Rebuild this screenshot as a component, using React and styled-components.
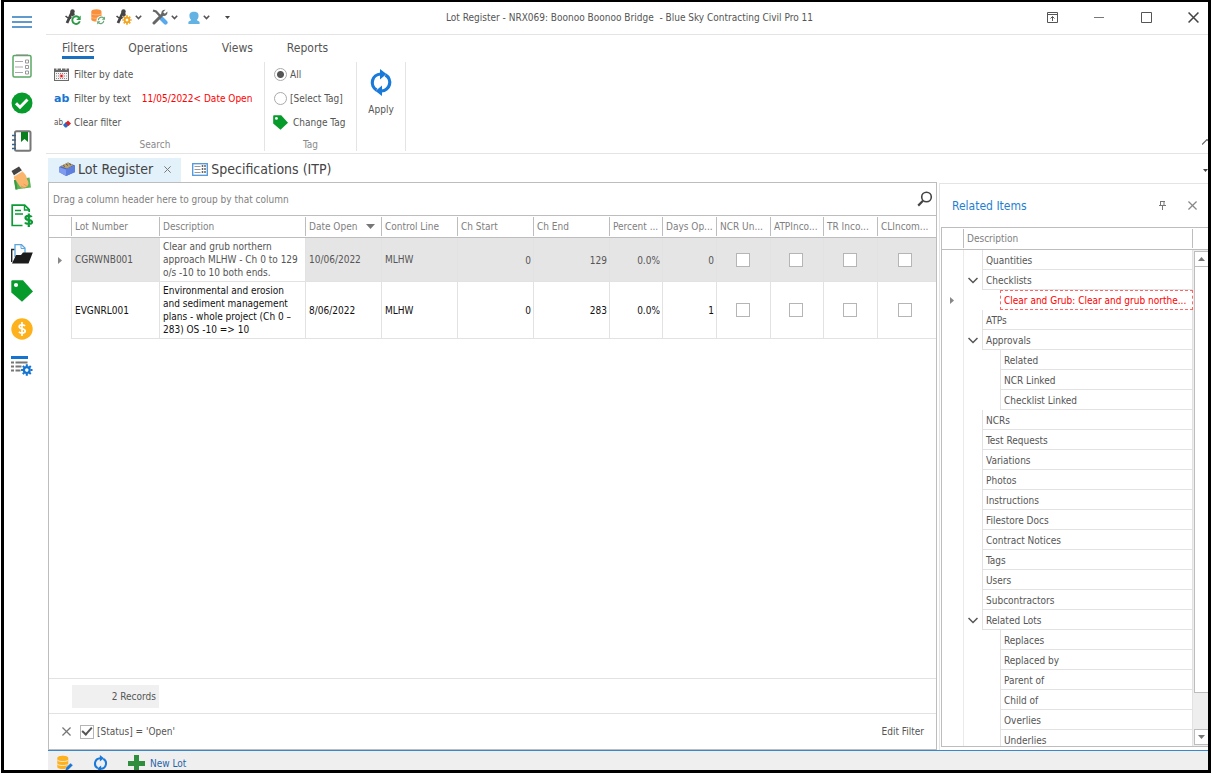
import React from 'react';
import styled, { createGlobalStyle } from 'styled-components';

const menuIcons = [
  { name: 'Checklists', icon: <ChecklistIcon /> },
  { name: 'Approvals', icon: <CheckIcon /> },
  { name: 'Notebook', icon: <NotebookIcon /> },
  { name: 'Payments', icon: <HandIcon /> },
  { name: 'Claims', icon: <ClaimIcon /> },
  { name: 'Files', icon: <FolderIcon /> },
  { name: 'Tags', icon: <TagIcon size={22} /> },
  { name: 'Costs', icon: <DollarIcon /> },
  { name: 'Settings', icon: <ListGearIcon /> },
];

const columns = [
  { title: 'Lot Number', width: 88 },
  { title: 'Description' },
  { title: 'Date Open', width: 76, sorted: true },
  { title: 'Control Line', width: 76 },
  { title: 'Ch Start', width: 76 },
  { title: 'Ch End', width: 76 },
  { title: 'Percent ...', width: 53 },
  { title: 'Days Op...', width: 54 },
  { title: 'NCR Un...', width: 54 },
  { title: 'ATPInco...', width: 53 },
  { title: 'TR Inco...', width: 54 },
  { title: 'CLIncom...', width: 58 },
];

const lots = [
  {
    number: 'CGRWNB001',
    description: 'Clear and grub northern approach MLHW - Ch 0 to 129 o/s -10 to 10 both ends.',
    date: '10/06/2022', line: 'MLHW', start: 0, end: 129, percent: '0.0%', days: 0,
    focused: true, height: 44,
  },
  {
    number: 'EVGNRL001',
    description: 'Environmental and erosion and sediment management plans - whole project (Ch 0 – 283) OS -10 => 10',
    date: '8/06/2022', line: 'MLHW', start: 0, end: 283, percent: '0.0%', days: 1,
    height: 57,
  },
];

const flags = ['NCR', 'ATP', 'TR', 'CL'];

const relatedItems = [
  { text: 'Quantities' },
  { text: 'Checklists', open: true },
  { text: 'Clear and Grub: Clear and grub northe...', child: true, current: true },
  { text: 'ATPs' },
  { text: 'Approvals', open: true },
  { text: 'Related', child: true },
  { text: 'NCR Linked', child: true },
  { text: 'Checklist Linked', child: true },
  { text: 'NCRs' },
  { text: 'Test Requests' },
  { text: 'Variations' },
  { text: 'Photos' },
  { text: 'Instructions' },
  { text: 'Filestore Docs' },
  { text: 'Contract Notices' },
  { text: 'Tags' },
  { text: 'Users' },
  { text: 'Subcontractors' },
  { text: 'Related Lots', open: true },
  { text: 'Replaces', child: true },
  { text: 'Replaced by', child: true },
  { text: 'Parent of', child: true },
  { text: 'Child of', child: true },
  { text: 'Overlies', child: true },
  { text: 'Underlies', child: true },
];

class App extends React.Component {
  render() {
    return (
      <Window>
        <GlobalStyle />
        <Sidebar>
          <Hamburger aria-label="Menu"><HamburgerIcon /></Hamburger>
          <SideMenu>
            {menuIcons.map(item => (
              <SideButton key={item.name} aria-label={item.name}>{item.icon}</SideButton>
            ))}
          </SideMenu>
        </Sidebar>
        <Main>
          <TitleBar />
          <Ribbon />
          <Workspace>
            <DocumentTabs />
            <Panels>
              <LotGrid />
              <RelatedPanel />
            </Panels>
            <StatusBar>
              <IconButton aria-label="Edit data"><DataEditIcon /></IconButton>
              <IconButton aria-label="Refresh"><RefreshIcon width={15} height={17} /></IconButton>
              <NewLot><PlusIcon />New Lot</NewLot>
            </StatusBar>
          </Workspace>
        </Main>
      </Window>
    );
  }
}

export default App;

function TitleBar() {
  return (
    <TitleHolder>
      <QuickAccess>
        <IconButton aria-label="Refresh project"><CompassIcon /></IconButton>
        <IconButton aria-label="Refresh data"><DataRefreshIcon /></IconButton>
        <IconButton aria-label="Project settings"><CompassIcon gear /><Chevron /></IconButton>
        <IconButton aria-label="Tools"><ToolsIcon /><Chevron /></IconButton>
        <IconButton aria-label="User"><UserIcon /><Chevron /></IconButton>
        <IconButton aria-label="Customise"><SmallArrow /></IconButton>
      </QuickAccess>
      <WindowTitle>{'Lot Register - NRX069: Boonoo Boonoo Bridge  - Blue Sky Contracting Civil Pro 11'}</WindowTitle>
      <WindowButtons>
        <WindowButton aria-label="Ribbon display">
          <svg width="11" height="11" fill="none" stroke="#555">
            <path d="M.5.5h10v10H.5zM.5 2.5h10M5.5 9V4.500M3.500 6.500l2-2 2 2" />
          </svg>
        </WindowButton>
        <WindowButton aria-label="Minimise">
          <svg width="11" height="11" stroke="#777"><path d="M0 5.500h10" /></svg>
        </WindowButton>
        <WindowButton aria-label="Maximise">
          <svg width="11" height="11" fill="none" stroke="#555"><path d="M.5.5h10v10H.5z" /></svg>
        </WindowButton>
        <WindowButton aria-label="Close"><CrossIcon size={11} color="#444" /></WindowButton>
      </WindowButtons>
    </TitleHolder>
  );
}

function Ribbon() {
  return (
    <RibbonHolder>
      <RibbonTabs>
        <RibbonTab $active>Filters</RibbonTab>
        <RibbonTab>Operations</RibbonTab>
        <RibbonTab>Views</RibbonTab>
        <RibbonTab>Reports</RibbonTab>
      </RibbonTabs>
      <RibbonBody>
        <RibbonGroup $width={219}>
          <RibbonRow><RibbonButton><CalendarIcon />Filter by date</RibbonButton></RibbonRow>
          <RibbonRow>
            <RibbonButton><TextIcon>ab</TextIcon>Filter by text</RibbonButton>
            <FilterText>11/05/2022&lt; Date Open</FilterText>
          </RibbonRow>
          <RibbonRow>
            <RibbonButton><EraseIcon><span>ab</span><EraserIcon /></EraseIcon>Clear filter</RibbonButton>
          </RibbonRow>
          <GroupTitle>Search</GroupTitle>
        </RibbonGroup>
        <RibbonGroup $width={92}>
          <RibbonRow>
            <RadioLabel><Radio type="radio" name="tag" defaultChecked />All</RadioLabel>
          </RibbonRow>
          <RibbonRow>
            <RadioLabel><Radio type="radio" name="tag" />[Select Tag]</RadioLabel>
          </RibbonRow>
          <RibbonRow><RibbonButton><TagIcon size={15} />Change Tag</RibbonButton></RibbonRow>
          <GroupTitle>Tag</GroupTitle>
        </RibbonGroup>
        <RibbonGroup $width={49}>
          <ApplyButton><RefreshIcon width={22} height={27} />Apply</ApplyButton>
        </RibbonGroup>
        <CollapseButton aria-label="Collapse ribbon">
          <svg width="6" height="6" fill="none" stroke="#666" strokeWidth="1.2"><path d="M0 5.500l5-5 5 5" /></svg>
        </CollapseButton>
      </RibbonBody>
    </RibbonHolder>
  );
}

function DocumentTabs() {
  return (
    <TabStrip>
      <DocumentTab $active>
        <TabName><LotBoxIcon />Lot Register</TabName>
        <IconButton aria-label="Close tab"><CrossIcon size={7} color="#777" /></IconButton>
      </DocumentTab>
      <DocumentTab>
        <TabName><SpecIcon />Specifications (ITP)</TabName>
      </DocumentTab>
      <TabListButton aria-label="Open tabs"><SmallArrow /></TabListButton>
    </TabStrip>
  );
}

function LotGrid() {
  return (
    <GridPanel>
      <GroupPanel>
        <span>Drag a column header here to group by that column</span>
        <IconButton aria-label="Search">
          <svg width="16" height="16" fill="none" stroke="#444">
            <circle cx="9.500" cy="6" r="4.800" strokeWidth="1.600" />
            <path d="M6 9.800L1.200 14.600" strokeWidth="2.200" />
          </svg>
        </IconButton>
      </GroupPanel>
      <Table>
        <colgroup>
          <Col $width={23} />
          {columns.map(col => <Col key={col.title} $width={col.width} />)}
        </colgroup>
        <thead>
          <tr>
            <HeadCell><HeadInner /></HeadCell>
            {columns.map((col, i) => (
              <HeadCell key={col.title}>
                <HeadInner $last={i === columns.length - 1}>
                  {col.title}
                  {col.sorted && <SortArrow viewBox="0 0 9 5"><path d="M0 0h9L4.500 5z" fill="#777" /></SortArrow>}
                </HeadInner>
              </HeadCell>
            ))}
          </tr>
        </thead>
        <tbody>
          {lots.map(lot => (
            <LotRow key={lot.number} $focused={lot.focused} $height={lot.height}>
              <MarkerCell>{lot.focused && <RowMarker />}</MarkerCell>
              <Cell>{lot.number}</Cell>
              <DescriptionCell>{lot.description}</DescriptionCell>
              <Cell>{lot.date}</Cell>
              <Cell>{lot.line}</Cell>
              <Cell $align="right">{lot.start}</Cell>
              <Cell $align="right">{lot.end}</Cell>
              <Cell $align="right">{lot.percent}</Cell>
              <Cell $align="right">{lot.days}</Cell>
              {flags.map(flag => (
                <Cell key={flag} $align="center"><CheckBox type="checkbox" aria-label={lot.number + ' ' + flag} /></Cell>
              ))}
            </LotRow>
          ))}
        </tbody>
      </Table>
      <Summary><RecordCount>2 Records</RecordCount></Summary>
      <FilterBar>
        <IconButton aria-label="Clear filter"><CrossIcon size={9} color="#777" /></IconButton>
        <FilterLabel><CheckBox type="checkbox" defaultChecked />[Status] = 'Open'</FilterLabel>
        <EditFilter>Edit Filter</EditFilter>
      </FilterBar>
    </GridPanel>
  );
}

function RelatedPanel() {
  return (
    <SidePanel>
      <PanelHeader>
        <PanelTitle>Related Items</PanelTitle>
        <IconButton aria-label="Pin">
          <svg width="7" height="9" fill="none" stroke="#777"><path d="M1 .5h5M1.500.5v4M5 .5v4M0 4.500h7M3.500 5v4" /></svg>
        </IconButton>
        <IconButton aria-label="Close panel"><CrossIcon size={9} color="#888" /></IconButton>
      </PanelHeader>
      <Tree>
        <TreeHead><TreeTitle>Description</TreeTitle></TreeHead>
        <TreeBody>
          <TreeList>
            {relatedItems.map(item => (
              <TreeRow key={item.text}>
                <TreeMarker>{item.current && <RowMarker />}</TreeMarker>
                <TreeIndent $child={item.child}>
                  {item.open && (
                    <IconButton aria-label={'Collapse ' + item.text}>
                      <svg width="10" height="7" fill="none" stroke="#555" strokeWidth="1.500"><path d="M.5 1L5 5.500 9.500 1" /></svg>
                    </IconButton>
                  )}
                </TreeIndent>
                <TreeText $current={item.current}>{item.text}</TreeText>
              </TreeRow>
            ))}
          </TreeList>
          <ScrollBar>
            <ScrollButton aria-label="Scroll up"><svg width="7" height="4" fill="#777"><path d="M0 4h7L3.500 0z" /></svg></ScrollButton>
            <ScrollThumb />
            <ScrollButton aria-label="Scroll down"><svg width="7" height="4" fill="#777"><path d="M0 0h7L3.500 4z" /></svg></ScrollButton>
          </ScrollBar>
        </TreeBody>
      </Tree>
    </SidePanel>
  );
}

/* icons */

function HamburgerIcon() {
  return <svg width="20" height="12" stroke="#2b78bd" strokeWidth="1.300"><path d="M0 1h20M0 6h20M0 11h20" /></svg>;
}

function Chevron() {
  return <svg width="7" height="5" fill="none" stroke="#555" strokeWidth="1.600"><path d="M.8.8l2.700 2.700L6.200.8" /></svg>;
}

function SmallArrow() {
  return <svg width="5" height="3" fill="#444"><path d="M0 0h5L2.500 3z" /></svg>;
}

function CrossIcon({ size, color }) {
  return (
    <svg width={size} height={size} viewBox="0 0 10 10" fill="none" stroke={color} strokeWidth="1.400">
      <path d="M.5.5l9 9M9.500.5l-9 9" />
    </svg>
  );
}

function RowMarker() {
  return <svg width="4" height="7" fill="#888"><path d="M0 0l4 3.500L0 7z" /></svg>;
}

function RefreshIcon({ width, height }) {
  return (
    <svg width={width} height={height} viewBox="0 0 22 27">
      <g fill="none" stroke="#1a7ad9" strokeWidth="3.200">
        <path d="M6.500 21A8.600 8.600 0 0 1 10.500 5" />
        <path d="M15.500 6A8.600 8.600 0 0 1 11.500 22" />
      </g>
      <path d="M10 0l6.500 5L10 10.500zM12 16.500v10.500l-6.500-5z" fill="#1a7ad9" />
    </svg>
  );
}

function ChecklistIcon() {
  return (
    <svg width="20" height="24" viewBox="0 0 20 24" fill="none">
      <rect x="1" y="1.500" width="18" height="21.500" rx="1.500" stroke="#5aa864" strokeWidth="1.500" />
      <path d="M4 1h12" stroke="#8a8a8a" />
      <path d="M3 7.500h8M3 13h8M3 18.500h8" stroke="#aaa" />
      <path d="M13.500 6h3v3h-3zM13.500 11.500h3v3h-3zM13.500 17h3v3h-3z" stroke="#999" />
    </svg>
  );
}

function CheckIcon() {
  return (
    <svg width="22" height="22" viewBox="0 0 22 22" fill="none">
      <circle cx="11" cy="11" r="10.500" fill="#079b2b" />
      <path d="M5 11.200l4 4 7.500-7.700" stroke="#fff" strokeWidth="3" />
    </svg>
  );
}

function NotebookIcon() {
  return (
    <svg width="20" height="22" viewBox="0 0 20 22">
      <rect x="3" y="1.200" width="15.500" height="19.500" rx="1.500" fill="#fff" stroke="#777" strokeWidth="2" />
      <path d="M9 2h7v10l-3.500-3L9 12z" fill="#07801c" />
      <path d="M0 5.500h4M0 10h4M0 14.500h4M0 18.500h4" stroke="#35648f" strokeWidth="1.500" />
    </svg>
  );
}

function HandIcon() {
  return (
    <svg width="22" height="24" viewBox="0 0 22 24">
      <path d="M3 14l15.500-2.500 1.500 10L4.500 23.500z" fill="#5cb458" />
      <path d="M3 14l1.500 9.500h2L5 14z" fill="#3a9a40" />
      <path d="M3 9.500L11 5c3 2.500 5 5 5 8.500 1.800 2 2.200 5 0 7-3 2-6 1.500-7.500-.5L5 14.500c-2-.5-2.500-3-2-5z" fill="#f9b66c" />
      <path d="M10 20l4 2M12.500 18l4 2.500" stroke="#d98f4a" strokeWidth=".7" />
      <path d="M.5 5L8 .5l3 4-8 5z" fill="#444" />
      <path d="M10.500 4.500l1 .9-8 5.200-.8-1.200z" fill="#eee" />
    </svg>
  );
}

function ClaimIcon() {
  return (
    <svg width="22" height="23" viewBox="0 0 22 23" fill="none" stroke="#0b9a35">
      <path d="M11.500 21.500H1.200V1.200h12.500l4.500 4.500V8" strokeWidth="1.700" />
      <path d="M13.500 1v5h5" strokeWidth="1.400" />
      <path d="M4 6.500h6M4 10h8" strokeWidth="1.500" />
      <path d="M20.700 13c-1-1.500-6.200-1.800-6.200.9 0 2.800 6.500 1.300 6.500 4 0 2.900-6 2.400-7 .6M17.800 9.500V23" strokeWidth="2.200" />
    </svg>
  );
}

function FolderIcon() {
  return (
    <svg width="22" height="20" viewBox="0 0 22 20">
      <path d="M.7 18V5.500h3" fill="none" stroke="#222" strokeWidth="1.400" />
      <path d="M4 13V.7h6.500L14 4v8" fill="#fff" stroke="#5ba6de" strokeWidth="1.300" />
      <path d="M10 .7V4.500h4" fill="none" stroke="#5ba6de" />
      <path d="M1 19.500L5 11h5l2-2.500h9.800L17.500 19.500z" fill="#1c1c1c" />
    </svg>
  );
}

function TagIcon({ size }) {
  return (
    <svg width={size} height={size} viewBox="0 0 22 22">
      <path d="M.3 1.500Q.3.300 1.500.3h10.500L22 11.500 11 21.800.3 12.500z" fill="#079b2b" />
      <circle cx="5" cy="5" r="2.100" fill="#fff" />
    </svg>
  );
}

function DollarIcon() {
  return (
    <svg width="22" height="22" viewBox="0 0 22 22" fill="none" stroke="#fff" strokeWidth="1.700">
      <circle cx="11" cy="11" r="10.700" fill="#fdb11d" stroke="none" />
      <path d="M14 8c-1-1.700-5.800-1.700-5.800.7 0 3 6 1.500 6 4.400 0 2.600-5 2.500-6.300.7M11 4v14" />
    </svg>
  );
}

function GearShape({ color, hole }) {
  return (
    <g stroke={color}>
      <circle cx="0" cy="0" r="3" fill={hole} strokeWidth="2.400" />
      <path d="M0-6v2M0 4v2M-6 0h2M4 0h2M-4.200-4.200l1.400 1.400M2.800 2.800l1.400 1.400M-4.200 4.200l1.400-1.400M2.800-2.800l1.400-1.400" strokeWidth="2.200" />
    </g>
  );
}

function ListGearIcon() {
  return (
    <svg width="22" height="20" viewBox="0 0 22 20">
      <path d="M0 1.500h17" stroke="#1574cf" strokeWidth="3" />
      <path d="M0 6.500h3M4.500 6.500h12M0 10.500h3M4.500 10.500h6M0 14.500h3M4.500 14.500h5" stroke="#777" strokeWidth="2.200" />
      <g transform="translate(15.800 14) scale(.95)"><GearShape color="#1574cf" hole="#fff" /></g>
    </svg>
  );
}

function CompassIcon({ gear }) {
  return (
    <svg width="16" height="16" viewBox="0 0 16 16" fill="none">
      <path d="M7 3L2 14M7.500 3l2 7" stroke="#444" strokeWidth="2.800" />
      <circle cx="7.500" cy="2.500" r="2.200" fill="#444" />
      <path d="M.5 7c2.500 3 6.500 3 9.500 0" stroke="#444" strokeWidth="1.500" />
      {gear ? (
        <g transform="translate(11 11)">
          <circle r="4.700" fill="#fff" />
          <g transform="scale(.78)"><GearShape color="#f0a420" hole="#fff" /></g>
        </g>
      ) : (
        <g>
          <circle cx="11" cy="11" r="5" fill="#fff" />
          <path d="M14 8.600a3.800 3.800 0 1 0 .8 3.600" stroke="#2a9a45" strokeWidth="1.900" />
          <path d="M15.700 6.500v4.500h-4.500z" fill="#2a9a45" />
        </g>
      )}
    </svg>
  );
}

function DataRefreshIcon() {
  return (
    <svg width="15" height="16" viewBox="0 0 15 16" fill="none">
      <path d="M.3 2.500c0-3 10.200-3 10.200 0v8c0 2.800-10.200 2.800-10.200 0z" fill="#f8903c" />
      <path d="M.3 4.700c1 1.500 9.200 1.500 10.200 0M.3 8.200c1 1.500 9.200 1.500 10.200 0" stroke="#fbd0aa" strokeWidth=".6" />
      <circle cx="10" cy="11.500" r="4.500" fill="#fff" />
      <path d="M12.800 9.200a3.200 3.200 0 0 0-5.500 2M7.500 13.800a3.200 3.200 0 0 0 5.300-2" stroke="#68a878" strokeWidth="1.200" />
      <path d="M14 7.500v3.300h-3.300zM6.200 15.500v-3.300h3.300z" fill="#68a878" />
    </svg>
  );
}

function ToolsIcon() {
  return (
    <svg width="16" height="16" viewBox="0 0 16 16" fill="none">
      <path d="M1 1.500l3 1 5.500 6" stroke="#666" strokeWidth="2.200" />
      <path d="M9.500 9.500l4 4" stroke="#58a8ee" strokeWidth="4.200" strokeLinecap="round" />
      <path d="M2 14L11 5" stroke="#666" strokeWidth="3" strokeLinecap="round" />
      <path d="M13.500.8l-2.500 2.500 1.700 1.700 2.600-2.500c.8 3.200-2.500 5.500-5 4C8 3.800 10.300-.2 13.500.8z" fill="#666" />
    </svg>
  );
}

function UserIcon() {
  return (
    <svg width="12" height="13" viewBox="0 0 12 13" fill="#62b2e4">
      <path d="M6 .8c4 0 4.800 2.200 4.500 4.700-.1 1.500-.8 2.500-1.700 3.400.3.800 2.800.7 2.800 2.600V13H.4v-1.500c0-1.900 2.500-1.800 2.800-2.600-.9-.9-1.600-1.900-1.700-3.400C1.200 3 2 .8 6 .8z" />
    </svg>
  );
}

function CalendarIcon() {
  return (
    <svg width="15" height="14" viewBox="0 0 15 14">
      <path d="M0 1.500h15v12.500H0z" fill="#6a6a6a" />
      <path d="M1 5h13v8H1z" fill="#f4f4f4" />
      <path d="M3 0v3M7.500 0v3M12 0v3" stroke="#fff" />
      <path d="M2 6.500h11M2 9h11M2 11.500h11" stroke="#888" strokeDasharray="1 1" />
      <path d="M5.500 7h4v4h-4z" fill="#f9b0b0" />
      <path d="M6.500 8h2v2h-2z" fill="#d11" />
    </svg>
  );
}

function EraserIcon() {
  return (
    <svg width="8" height="8" viewBox="0 0 8 8">
      <path d="M0 5l3-3 3 3-2.500 2.500H2z" fill="#2c6bc5" />
      <path d="M2.500 3L5 .5l3 3L5.500 6z" fill="#d92525" />
    </svg>
  );
}

function LotBoxIcon() {
  return (
    <svg width="16" height="14" viewBox="0 0 16 14">
      <path d="M0 5l9-4.500 7 3v6.500l-9 4-7-4z" fill="#4b6cc4" />
      <path d="M1.500 4L9 .5l5.500 2.500L8 6.500z" fill="#b9a274" />
      <path d="M4 3.500l2 1M7 2l2 1.500M10 1.500l2 1.500" stroke="#6d5b35" />
      <path d="M0 5l7 2.500 9-4V10l-9 4-7-4z" fill="#7f9bef" />
      <path d="M7 7.500L16 3.500V10l-9 4z" fill="#5e7fdc" />
    </svg>
  );
}

function SpecIcon() {
  return (
    <svg width="16" height="13" viewBox="0 0 16 13" fill="none">
      <rect x=".7" y=".7" width="14.600" height="11.600" stroke="#4f95dc" strokeWidth="1.300" fill="#fff" />
      <path d="M2.500 3.500h6M2.500 6.500h6M2.500 9.500h6" stroke="#999" />
      <path d="M10.500 2v9M13 2v9" stroke="#666" strokeWidth="1.500" strokeDasharray="2 1" />
    </svg>
  );
}

function DataEditIcon() {
  return (
    <svg width="16" height="17" viewBox="0 0 16 17" fill="none">
      <path d="M.3 3c0-3 11-3 11 0v9c0 2.800-11 2.800-11 0z" fill="#fdb11d" />
      <path d="M.3 5c1 2 10 2 11 0M.3 9c1 2 10 2 11 0" stroke="#efefef" strokeWidth=".9" />
      <path d="M8 16l1-3.500L13.500 8l2.500 2.300-4.500 4.500z" fill="#1a75d2" stroke="#efefef" strokeWidth=".5" />
    </svg>
  );
}

function PlusIcon() {
  return <svg width="17" height="17"><path d="M6 0h5v6h6v5h-6v6H6v-6H0V6h6z" fill="#2f8f3f" /></svg>;
}

/* styles */

const GlobalStyle = createGlobalStyle`
  * {
    box-sizing: border-box;
  }
  body {
    margin: 0;
    background: #fff;
    color: #555;
    font-family: "DejaVu Sans Condensed", "DejaVu Sans", sans-serif;
    font-size: 10px;
    line-height: 13px;
  }
  button, input {
    font: inherit;
    color: inherit;
    margin: 0;
  }
  button {
    padding: 0;
    border: 0;
    background: none;
  }
  svg {
    display: block;
    flex: none;
  }
`;

const Window = styled.div`
  display: flex;
  height: calc(100vh - 1px);
  min-height: 480px;
  margin-left: 1px;
  border: 3px solid #000;
  border-top-width: 2px;
  overflow: hidden;
`;

const Sidebar = styled.nav`
  flex: none;
  width: 42px;
  padding-right: 6px;
`;

const Hamburger = styled.button`
  display: flex;
  align-items: center;
  justify-content: center;
  width: 100%;
  height: 40px;
`;

const SideMenu = styled.div`
  display: grid;
  grid-auto-rows: 1fr;
  height: 338px;
  margin-top: 5px;
`;

const SideButton = styled.button`
  display: flex;
  align-items: center;
  justify-content: center;
`;

const Main = styled.main`
  display: flex;
  flex: 1;
  flex-direction: column;
  min-width: 0;
`;

const IconButton = styled.button`
  display: flex;
  align-items: center;
  gap: 3px;
`;

const TitleHolder = styled.header`
  display: flex;
  flex: none;
  align-items: center;
  height: 33px;
  padding-bottom: 2px;
  border-bottom: 1px solid #e4e4e4;
`;

const QuickAccess = styled.div`
  display: flex;
  align-items: center;
  gap: 10px;
  padding-left: 19px;

  ${IconButton}:last-child {
    margin-left: 5px;
  }
`;

const WindowTitle = styled.div`
  flex: 1;
  padding-right: 8px;
  text-align: center;
  white-space: pre;
`;

const WindowButtons = styled.div`
  display: flex;
  gap: 17px;
`;

const WindowButton = styled.button`
  display: flex;
  align-items: center;
  justify-content: center;
  width: 30px;
  height: 30px;
`;

const RibbonHolder = styled.section`
  flex: none;
  border-bottom: 1px solid #e4e4e4;
`;

const RibbonTabs = styled.div`
  display: flex;
  gap: 34px;
  padding-left: 16px;
`;

const RibbonTab = styled.button`
  padding-top: 5px;
  border-bottom: 3px solid ${props => props.$active ? '#1a6fc0' : 'transparent'};
  font-size: 12px;
  line-height: 16px;
`;

const RibbonBody = styled.div`
  display: flex;
  padding: 3px 0 2px;
`;

const RibbonGroup = styled.div`
  width: ${props => props.$width}px;
  padding-left: 8px;
  border-right: 1px solid #e4e4e4;
`;

const RibbonRow = styled.div`
  display: flex;
  align-items: center;
  gap: 11px;
  height: 24px;
`;

const RibbonButton = styled.button`
  display: flex;
  align-items: center;
  gap: 5px;
  white-space: nowrap;
`;

const TextIcon = styled.span`
  width: 15px;
  color: #1a75d2;
  font-family: "DejaVu Sans", sans-serif;
  font-size: 11px;
  font-weight: bold;
`;

const EraseIcon = styled.span`
  display: flex;
  align-items: flex-end;
  width: 15px;
  font-size: 8px;
  line-height: 11px;
`;

const FilterText = styled.span`
  color: #f00;
  white-space: nowrap;
`;

const GroupTitle = styled.div`
  margin: 4px 0 0 -8px;
  color: #8a8a8a;
  text-align: center;
`;

const RadioLabel = styled.label`
  display: flex;
  align-items: center;
  gap: 3px;
  padding-left: 1px;
`;

const Radio = styled.input`
  appearance: none;
  width: 13px;
  height: 13px;
  border: 1px solid #aaa;
  border-radius: 50%;
  background: #fff;

  &:checked {
    background: radial-gradient(#555 0 3px, #fff 4px);
  }
`;

const ApplyButton = styled.button`
  display: flex;
  flex-direction: column;
  align-items: center;
  gap: 7px;
  width: 32px;
  padding-top: 7px;
`;

const CollapseButton = styled.button`
  align-self: flex-end;
  margin: 0 0 6px auto;
`;

const Workspace = styled.div`
  display: flex;
  flex: 1;
  flex-direction: column;
  min-height: 0;
  padding-left: 2px;
`;

const TabStrip = styled.div`
  display: flex;
  flex: none;
  height: 28px;
  padding-top: 4px;
`;

const DocumentTab = styled.div`
  display: flex;
  align-items: center;
  gap: 11px;
  padding: 0 10px 2px 11px;
  background: ${props => props.$active ? '#e3f1fa' : 'none'};
`;

const TabName = styled.button`
  display: flex;
  align-items: center;
  gap: 3px;
  color: #444;
  font-size: 14px;
  line-height: 18px;
`;

const TabListButton = styled.button`
  margin-left: auto;
`;

const Panels = styled.div`
  display: flex;
  flex: 1;
  gap: 2px;
  min-height: 0;
`;

const GridPanel = styled.section`
  display: flex;
  flex: 1;
  flex-direction: column;
  min-width: 0;
  border: 1px solid #bdbdbd;
`;

const GroupPanel = styled.div`
  display: flex;
  flex: none;
  align-items: center;
  justify-content: space-between;
  height: 33px;
  padding: 0 3px 0 4px;
  border-bottom: 1px solid #bdbdbd;
  color: #808080;
`;

const Table = styled.table`
  width: 100%;
  table-layout: fixed;
  border-collapse: separate;
  border-spacing: 0;
`;

const Col = styled.col`
  width: ${props => props.$width ? props.$width + 'px' : 'auto'};
`;

const HeadCell = styled.th`
  height: 22px;
  padding: 1px 0;
  border-bottom: 1px solid #bdbdbd;
  color: #808080;
  font-weight: normal;
  text-align: left;
`;

const HeadInner = styled.div`
  display: flex;
  align-items: center;
  height: 19px;
  padding: 0 3px;
  border-right: ${props => props.$last ? '0' : '1px solid #bdbdbd'};
  white-space: nowrap;
`;

const SortArrow = styled.svg`
  width: 9px;
  height: 5px;
  margin: 0 3px 0 auto;
`;

const MarkerCell = styled.td`
  padding: 0 9px;
  border-right: 1px solid #e2e2e2;
`;

const cellPadding = {
  left: '0 0 0 3px',
  right: '1px 2px 0 3px',
  center: '0 2px 0 0',
};

const Cell = styled.td`
  padding: ${props => cellPadding[props.$align || 'left']};
  border-right: 1px solid #e2e2e2;
  border-bottom: 1px solid #e2e2e2;
  background: inherit;
  text-align: ${props => props.$align || 'left'};

  &:last-child {
    padding-right: 4px;
    border-right: 0;
  }
`;

const DescriptionCell = styled(Cell)`
  padding-right: 6px;
  background: #fff;
`;

const LotRow = styled.tr`
  height: ${props => props.$height}px;
  background: ${props => props.$focused ? '#e5e5e5' : '#fff'};
  color: ${props => props.$focused ? '#555' : '#111'};

  ${MarkerCell} {
    background: #fff;
  }
`;

const CheckBox = styled.input`
  appearance: none;
  display: inline-block;
  width: 14px;
  height: 14px;
  border: 1px solid #b5b5b5;
  background: #fff;
  vertical-align: middle;

  &:checked {
    display: inline-flex;
    align-items: center;
    justify-content: center;
  }

  &:checked::after {
    content: '';
    width: 8px;
    height: 4px;
    margin-bottom: 3px;
    border: solid #555;
    border-width: 0 0 2px 2px;
    transform: rotate(-48deg);
  }
`;

const Summary = styled.div`
  flex: none;
  height: 36px;
  margin-top: auto;
  padding: 6px 23px;
  border-top: 1px solid #e2e2e2;
  border-bottom: 1px solid #e2e2e2;
`;

const RecordCount = styled.div`
  width: 87px;
  padding-right: 3px;
  background: #f0f0f0;
  line-height: 23px;
  text-align: right;
`;

const FilterBar = styled.div`
  display: flex;
  flex: none;
  align-items: center;
  gap: 9px;
  height: 35px;
  padding: 0 12px 0 13px;
`;

const FilterLabel = styled.label`
  display: flex;
  align-items: center;
  gap: 3px;
`;

const EditFilter = styled.button`
  margin-left: auto;
`;

const SidePanel = styled.aside`
  display: flex;
  flex: none;
  flex-direction: column;
  width: 269px;
  margin-top: 1px;
  padding: 0 0 3px 1px;
  border: solid #e4e4e4;
  border-width: 1px 0 0 1px;
`;

const PanelHeader = styled.div`
  display: flex;
  flex: none;
  align-items: center;
  gap: 22px;
  height: 43px;
  padding: 0 11px;
`;

const PanelTitle = styled.h2`
  flex: 1;
  margin: 0;
  color: #1f7fd1;
  font-size: 12px;
  font-weight: normal;
  line-height: 16px;
`;

const Tree = styled.div`
  display: flex;
  flex: 1;
  flex-direction: column;
  min-height: 0;
  border: 1px solid #bdbdbd;
  border-right: 0;
`;

const TreeHead = styled.div`
  flex: none;
  padding: 1px 15px 1px 21px;
  border-bottom: 1px solid #bdbdbd;
  color: #808080;
`;

const TreeTitle = styled.div`
  padding: 0 3px;
  border: solid #bdbdbd;
  border-width: 0 1px;
  line-height: 19px;
`;

const TreeBody = styled.div`
  display: flex;
  flex: 1;
  min-height: 0;
`;

const TreeList = styled.ul`
  flex: 1;
  min-width: 0;
  margin: 0;
  padding: 0;
  list-style: none;
  overflow: hidden;
`;

const TreeRow = styled.li`
  display: flex;
  height: 20px;
`;

const TreeMarker = styled.div`
  display: flex;
  flex: none;
  align-items: center;
  width: 22px;
  padding-left: 8px;
  border-right: 1px solid #eaeaea;
`;

const TreeIndent = styled.div`
  display: flex;
  flex: none;
  align-items: center;
  width: ${props => props.$child ? 36 : 18}px;
  padding-left: 4px;
`;

const TreeText = styled.div`
  flex: 1;
  min-width: 0;
  padding-left: 3px;
  border: solid #e2e2e2;
  border-width: 0 1px 1px 1px;
  line-height: 21px;
  white-space: nowrap;
  ${props => props.$current && `
    border: 1px dashed #f66;
    color: #f00;
    line-height: 19px;
  `}
`;

const ScrollBar = styled.div`
  display: flex;
  flex: none;
  flex-direction: column;
  width: 15px;
  padding: 1px 0 1px 1px;
  background: #eee;
`;

const ScrollButton = styled.button`
  display: flex;
  flex: none;
  align-items: center;
  justify-content: center;
  height: 16px;
  border: 1px solid #bdbdbd;
  border-right: 0;
  background: #fff;
`;

const ScrollThumb = styled.div`
  flex: 1;
  margin-bottom: 36px;
  border: solid #bdbdbd;
  border-width: 0 0 1px 1px;
  background: #fff;
`;

const StatusBar = styled.footer`
  display: flex;
  flex: none;
  align-items: flex-start;
  gap: 20px;
  height: 20px;
  padding: 4px 9px;
  border-top: 1px solid #3a87cc;
  background: #efefef;
  overflow: hidden;
`;

const NewLot = styled.button`
  display: flex;
  align-items: center;
  gap: 5px;
  color: #1f64a8;
`;
